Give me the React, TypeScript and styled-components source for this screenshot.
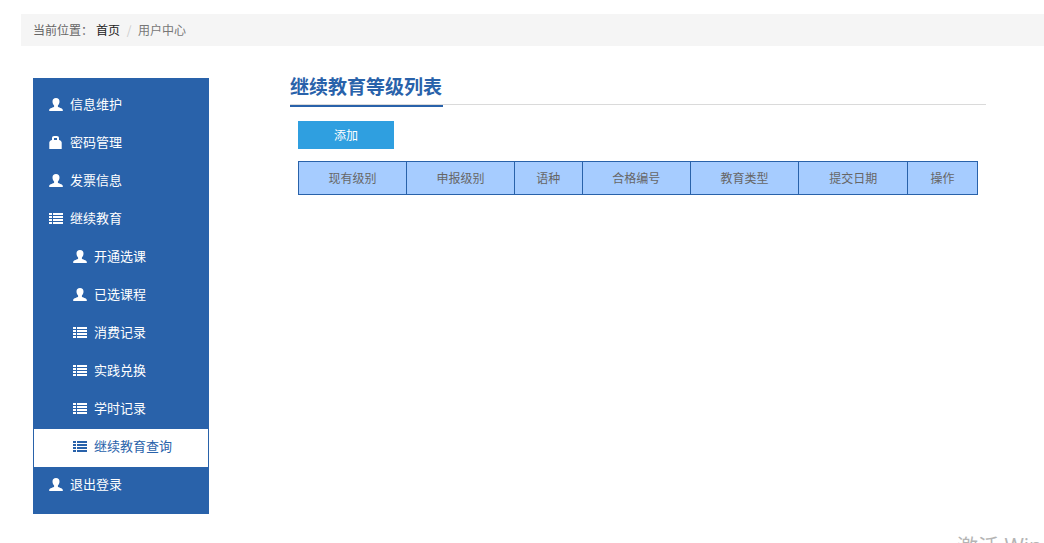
import React from "react";
import styled, { createGlobalStyle } from "styled-components";

const blue = "#2962aa";

const GlobalStyle = createGlobalStyle`
  * { box-sizing: border-box; }
  body {
    margin: 0;
    background: #fff;
    color: #666;
    font: 12px/20px "Noto Sans CJK SC", "Open Sans", sans-serif;
  }
`;

const Page = styled.div`
  position: relative;
  min-height: 100vh;
  padding: 14px 0 0 21px;
  overflow: hidden;
`;

const Breadcrumb = styled.nav`
  display: flex;
  align-items: center;
  height: 32px;
  padding: 0 12px;
  background: #f5f5f5;
`;

const CrumbLabel = styled.span`
  margin-right: 3px;
`;

const CrumbLink = styled.a`
  color: #222;
  text-decoration: none;
`;

const Separator = styled.span`
  width: 18px;
  color: #ccc;
  text-align: center;
`;

const Current = styled.span`
  color: #777;
`;

const Columns = styled.div`
  display: flex;
  align-items: flex-start;
  gap: 81px;
  padding: 32px 58px 0 12px;
`;

const Sidebar = styled.nav`
  flex: 0 0 176px;
  padding: 9px 1px;
  background: ${blue};
`;

const Menu = styled.ul`
  margin: 0;
  padding: 0;
  list-style: none;
`;

const MenuLink = styled.a<{ $nested?: boolean; $active?: boolean }>`
  display: flex;
  align-items: center;
  gap: 7px;
  height: 38px;
  padding-bottom: 4px;
  padding-left: ${(p) => (p.$nested ? 39 : 15)}px;
  background: ${(p) => (p.$active ? "#fff" : "transparent")};
  color: ${(p) => (p.$active ? blue : "#fff")};
  font-size: 13px;
  text-decoration: none;
`;

const Glyph = styled.svg`
  flex: none;
  width: 14px;
  height: 14px;
  fill: currentColor;
`;

const Main = styled.main`
  flex: 1;
  min-width: 0;
`;

const Heading = styled.header`
  display: flex;
  height: 27px;
  border-bottom: 1px solid #dadada;
`;

const Title = styled.h1`
  flex: none;
  height: 29px;
  margin: 0;
  padding-right: 1px;
  border-bottom: 2px solid ${blue};
  color: ${blue};
  font-size: 19px;
  line-height: 16px;
`;

const Content = styled.section`
  padding: 16px 8px 0;
`;

const AddButton = styled.button`
  display: block;
  width: 96px;
  height: 28px;
  margin-bottom: 12px;
  padding: 0;
  border: 0;
  background: #2f9fe0;
  color: #fff;
  font: inherit;
`;

const Table = styled.table`
  width: 100%;
  border-collapse: collapse;
  table-layout: fixed;
`;

const HeadCell = styled.th<{ $width: string }>`
  width: ${(p) => p.$width};
  height: 33px;
  padding: 0;
  border: 1px solid ${blue};
  background: #a6ccff;
  font-weight: normal;
`;

const Watermark = styled.div`
  position: absolute;
  right: 2px;
  bottom: -18px;
  color: #b4b4b4;
  font-size: 21px;
  line-height: 30px;
  font-family: "Open Sans", "Noto Sans CJK SC", sans-serif;
  white-space: nowrap;
  pointer-events: none;
`;

type IconName = "user" | "lock" | "list";

function Icon({ name }: { name: IconName }) {
  return (
    <Glyph viewBox="0 0 14 14" aria-hidden="true">
      {name === "user" && (
        <path d="M7 1C9.3 1 10.5 2.4 10.5 4.6C10.5 6.4 9.8 7.6 8.9 8.5V9.8C9.2 10.5 13.8 11.2 13.8 13V14H.2V13C.2 11.2 4.8 10.5 5.1 9.8V8.5C4.2 7.6 3.5 6.4 3.5 4.6C3.5 2.4 4.7 1 7 1Z" />
      )}
      {name === "lock" && (
        <path
          fillRule="evenodd"
          d="M3 5V3.2C3 1.8 3.8 1 5.2 1H7.8C9.2 1 10 1.8 10 3.2V5C11.5 5.3 12.7 6.3 12.7 7.5V14H.3V7.5C.3 6.3 1.5 5.3 3 5ZM5 5H8V3H5Z"
        />
      )}
      {name === "list" && (
        <path d="M0 2H3V4H0ZM4 2H14V4H4ZM0 5H3V7H0ZM4 5H14V7H4ZM0 8H3V10H0ZM4 8H14V10H4ZM0 11H3V13H0ZM4 11H14V13H4Z" />
      )}
    </Glyph>
  );
}

const menu: { text: string; icon: IconName; nested?: boolean; active?: boolean }[] = [
  { text: "信息维护", icon: "user" },
  { text: "密码管理", icon: "lock" },
  { text: "发票信息", icon: "user" },
  { text: "继续教育", icon: "list" },
  { text: "开通选课", icon: "user", nested: true },
  { text: "已选课程", icon: "user", nested: true },
  { text: "消费记录", icon: "list", nested: true },
  { text: "实践兑换", icon: "list", nested: true },
  { text: "学时记录", icon: "list", nested: true },
  { text: "继续教育查询", icon: "list", nested: true, active: true },
  { text: "退出登录", icon: "user" },
];

const columns = [
  { text: "现有级别", width: "15.9%" },
  { text: "申报级别", width: "15.9%" },
  { text: "语种", width: "10%" },
  { text: "合格编号", width: "15.9%" },
  { text: "教育类型", width: "16%" },
  { text: "提交日期", width: "16%" },
  { text: "操作", width: "auto" },
];

export default function App() {
  return (
    <Page lang="zh-CN">
      <GlobalStyle />
      <Breadcrumb>
        <CrumbLabel>当前位置：</CrumbLabel>
        <CrumbLink href="#">首页</CrumbLink>
        <Separator>/</Separator>
        <Current>用户中心</Current>
      </Breadcrumb>
      <Columns>
        <Sidebar>
          <Menu>
            {menu.map((item) => (
              <li key={item.text}>
                <MenuLink
                  href="#"
                  $nested={item.nested}
                  $active={item.active}
                  aria-current={item.active ? "page" : undefined}
                >
                  <Icon name={item.icon} />
                  {item.text}
                </MenuLink>
              </li>
            ))}
          </Menu>
        </Sidebar>
        <Main>
          <Heading>
            <Title>继续教育等级列表</Title>
          </Heading>
          <Content>
            <AddButton type="button">添加</AddButton>
            <Table>
              <thead>
                <tr>
                  {columns.map((c) => (
                    <HeadCell key={c.text} scope="col" $width={c.width}>
                      {c.text}
                    </HeadCell>
                  ))}
                </tr>
              </thead>
            </Table>
          </Content>
        </Main>
      </Columns>
      <Watermark>激活 Win</Watermark>
    </Page>
  );
}
